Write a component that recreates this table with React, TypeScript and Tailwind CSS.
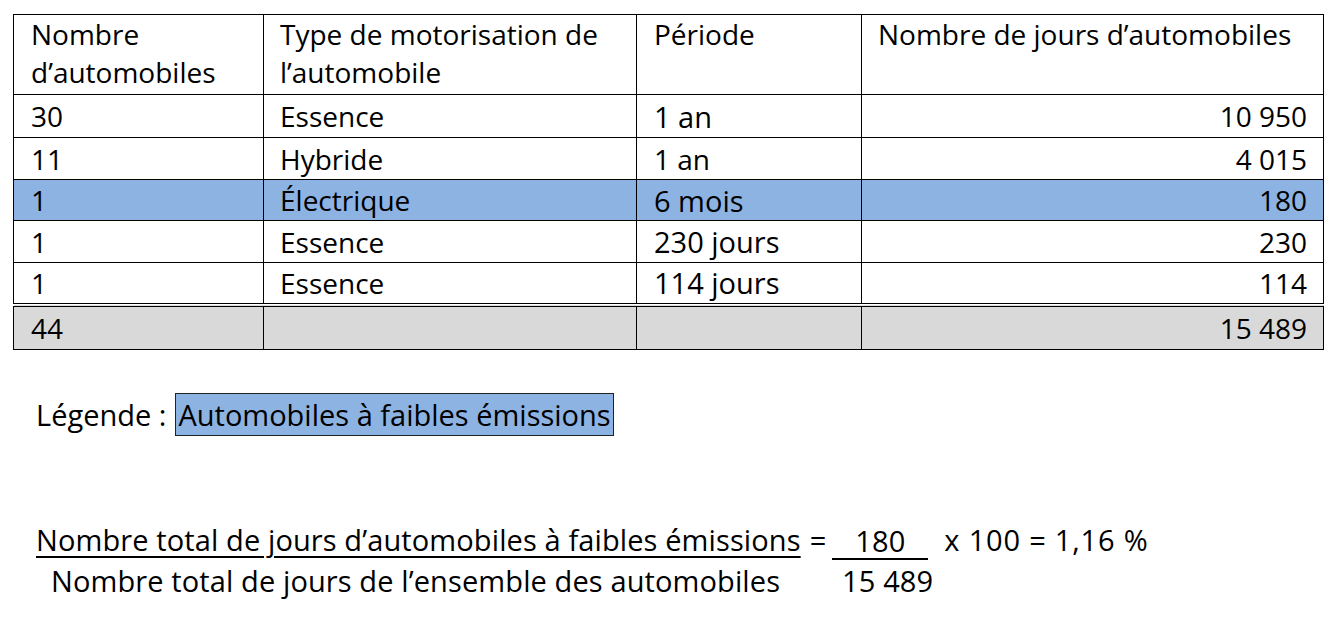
import React from "react";

const rows = [
  { n: "30", t: "Essence", p: "1 an", big: true, d: "10 950", hl: false },
  { n: "11", t: "Hybride", p: "1 an", big: false, d: "4 015", hl: false },
  { n: "1", t: "Électrique", p: "6 mois", big: true, d: "180", hl: true },
  { n: "1", t: "Essence", p: "230 jours", big: true, d: "230", hl: false },
  { n: "1", t: "Essence", p: "114 jours", big: true, d: "114", hl: false },
];

const heights = ["h-[43px]", "h-[42px]", "h-[41px]", "h-[42px]", "h-[42px]"];

export default function App() {
  return (
    <div
      className="w-[1339px] h-[624px] bg-white text-black overflow-hidden"
      style={{ fontFamily: "'Open Sans', sans-serif" }}
    >
      <div className="pt-[14px] pl-[13px]">
        <table className="border-collapse w-[1310px] table-fixed text-[28px]">
          <colgroup>
            <col className="w-[250px]" />
            <col className="w-[373px]" />
            <col className="w-[225px]" />
            <col className="w-[462px]" />
          </colgroup>
          <tbody>
            <tr className="h-[80px]">
              <td className="border border-black align-top pl-[17px] pt-0 leading-[38px] whitespace-nowrap">
                Nombre
                <br />
                d’automobiles
              </td>
              <td className="border border-black align-top pl-[16px] pt-0 leading-[38px] whitespace-nowrap">
                Type de motorisation de
                <br />
                l’automobile
              </td>
              <td className="border border-black align-top pl-[17px] pt-0 leading-[38px]">
                Période
              </td>
              <td className="border border-black align-top pl-[16px] pt-0 leading-[38px] whitespace-nowrap">
                Nombre de jours d’automobiles
              </td>
            </tr>
            {rows.map((r, i) => (
              <tr
                key={i}
                className={`${heights[i]} ${r.hl ? "bg-[#8db3e2]" : ""}`}
              >
                <td className="border border-black pl-[17px] leading-none">{r.n}</td>
                <td className="border border-black pl-[16px] leading-none">{r.t}</td>
                <td
                  className={`border border-black pl-[17px] leading-none ${
                    r.big ? "text-[29px]" : ""
                  }`}
                >
                  {r.p}
                </td>
                <td className="border border-black pr-[16px] text-right leading-none">
                  {r.d}
                </td>
              </tr>
            ))}
            <tr className="h-[45px] bg-[#d9d9d9]">
              <td className="border border-black border-t-[4px] border-double pl-[17px] leading-none">
                44
              </td>
              <td className="border border-black border-t-[4px] border-double"></td>
              <td className="border border-black border-t-[4px] border-double"></td>
              <td className="border border-black border-t-[4px] border-double pr-[16px] text-right leading-none">
                15 489
              </td>
            </tr>
          </tbody>
        </table>
      </div>

      <div className="mt-[43px] pl-[36px] flex items-center text-[29px] leading-none">
        <span>Légende :</span>
        <span className="ml-[9px] h-[43px] px-[2px] flex items-center bg-[#8db3e2] border border-[#222]">
          Automobiles à faibles émissions
        </span>
      </div>

      <div className="mt-[83px] pl-[36px] text-[29px] leading-[41px] whitespace-nowrap tracking-[0.11px]">
        <div className="flex items-end">
          <span className="underline decoration-[2px] underline-offset-[5px]">
            Nombre total de jours d’automobiles à faibles émissions
          </span>
          <span className="ml-[9px]">=</span>
          <span className="ml-[6px] inline-block w-[96px] text-center border-b-2 border-black leading-[34px]">
            180
          </span>
          <span className="ml-[16px] tracking-[0.8px]">x 100 = 1,16 %</span>
        </div>
        <div className="flex">
          <span className="pl-[15px]">
            Nombre total de jours de l’ensemble des automobiles
          </span>
          <span className="ml-[62px]">15 489</span>
        </div>
      </div>
    </div>
  );
}
